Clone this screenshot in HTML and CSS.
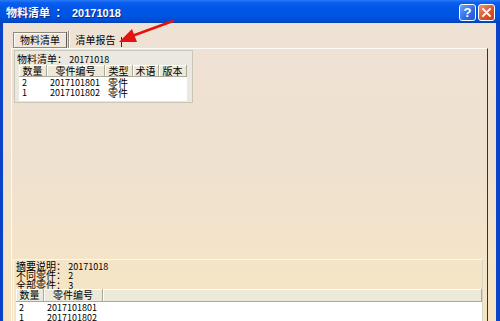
FILE: index.html
```html
<!DOCTYPE html>
<html lang="zh-CN">
<head>
  <meta charset="UTF-8" />
  <title>物料清单</title>
  <link rel="stylesheet" href="styles.css">
</head>
<body>
  <div class="window">
    <!-- Title bar -->
    <div class="titlebar">
      <span class="title">物料清单 ： <span class="tnum">20171018</span></span>
      <div class="caption-btns">
        <span class="cbtn help">?</span>
        <span class="cbtn close">
          <svg width="9" height="9" viewBox="0 0 9 9"><path d="M1 1L8 8M8 1L1 8" stroke="#fff" stroke-width="1.8" stroke-linecap="round"/></svg>
        </span>
      </div>
    </div>

    <div class="client">
      <div class="tabs">
        <div class="tab">物料清单</div>
        <div class="tab current">清单报告</div>
      </div>

      <div class="panel">
        <!-- BOM group -->
        <div class="bom-box">
          <div class="bom-title">物料清单： <span class="num">20171018</span></div>
          <div class="list">
            <div class="head">
              <span class="c1">数量</span><span class="c2">零件编号</span><span class="c3">类型</span><span class="c4">术语</span><span class="c5">版本</span>
            </div>
            <div class="row first"><span class="c1 num">2</span><span class="c2 num">2017101801</span><span class="c3">零件</span></div>
            <div class="row"><span class="c1 num">1</span><span class="c2 num">2017101802</span><span class="c3">零件</span></div>
          </div>
        </div>

        <!-- Summary -->
        <div class="summary">
          <div class="lines">
            <div>摘要说明： <span class="num">20171018</span></div>
            <div>不同零件： <span class="num">2</span></div>
            <div>全部零件： <span class="num">3</span></div>
          </div>
          <div class="list wide">
            <div class="head">
              <span class="c1">数量</span><span class="c2w">零件编号</span><span class="fill"></span>
            </div>
            <div class="row first"><span class="c1 num">2</span><span class="c2w num">2017101801</span></div>
            <div class="row"><span class="c1 num">1</span><span class="c2w num">2017101802</span></div>
          </div>
        </div>
      </div>
    </div>

    <!-- annotation arrow -->
    <svg class="arrow" width="500" height="60" viewBox="0 0 500 60">
      <line x1="173" y1="21" x2="132" y2="36" stroke="#e3140f" stroke-width="2.6" stroke-linecap="round"/>
      <polygon points="119,42 137,42 132,29" fill="#e3140f"/>
    </svg>
  </div>
</body>
</html>
```

FILE: styles.css
```css
/* Reset */
* { box-sizing: border-box; margin: 0; padding: 0; }
body { width: 500px; height: 321px; overflow: hidden; font-family: "Noto Sans CJK SC", "Liberation Sans", sans-serif; font-size: 10px; color: #000; }

/* Window frame */
.window { position: relative; height: 321px; display: flex; flex-direction: column; background: linear-gradient(to right, #0a3fc4, #0a55e0 2%, #0a55e0 98%, #0a3fc4); }
.titlebar { height: 23px; flex: none; display: flex; align-items: center; justify-content: space-between; padding: 2px 5px 0 6px; color: #fff;
  background: linear-gradient(to bottom, #2a7bf4 0%, #0a5ef0 12%, #0056e6 35%, #0054e2 70%, #004bd0 92%, #0040b4 100%); }
.title { font-weight: bold; font-size: 11px; line-height: 14px; word-spacing: 3px; text-shadow: 1px 1px #0b2a8c; }
.tnum { font-family: "Liberation Sans", sans-serif; }
.caption-btns { display: flex; gap: 2px; }
.cbtn { width: 17px; height: 17px; border: 1px solid #fff; border-radius: 3px; display: flex; align-items: center; justify-content: center; color: #fff; font-family: "Liberation Sans", sans-serif; font-weight: bold; font-size: 13px; }
.cbtn.help { background: linear-gradient(135deg, #6ea3f8, #2f6ae4 60%, #2457d0); }
.cbtn.close { background: linear-gradient(135deg, #f0946c, #d9512c 60%, #c4401e); }

/* Client area */
.client { flex: 1; margin: 0 4px 0 3px; border-left: 1px solid #d3ddf4; padding: 8px 8px 0 7px; display: flex; flex-direction: column;
  background: linear-gradient(to bottom, #eee2d5 0%, #efe1cf 50%, #f4e4c8 80%, #f6e5c3 100%); }

/* Tabs */
.tabs { display: flex; height: 17px; padding-left: 2px; flex: none; }
.tab { width: 54px; text-align: center; line-height: 14px; }
.tab:first-child { margin-top: 1px; border: 1px solid #8d8a80; border-right-color: #5e5c55; box-shadow: inset 1px 1px #fdfbf6; background: #efe7dc; }
.tab.current { margin-left: 1px; line-height: 17px; border-left: 1px solid #8d8a80; box-shadow: inset 1px 0 #fdfbf6;
  background: linear-gradient(#2b2b2b, #2b2b2b) right 6px / 1px 10px no-repeat; }

/* Tab panel */
.panel { flex: 1; display: flex; flex-direction: column; justify-content: space-between; border-top: 1px solid #fdfbf6; border-left: 1px solid #fdfbf6; border-right: 1px solid #34332f; padding: 1px 4px 0 1px; }
.num { font-size: 9px; }

/* Group box with bom list */
.bom-box { width: 179px; height: 53px; margin-left: 1px; border: 1px solid #c9c5b8; background: #ebe8df; padding: 2px 0 0 2px; }
.bom-title { height: 11px; line-height: 11px; }
.list { background: #fff; width: 168px; height: 36px; margin: 1px 0 0 2px; overflow: hidden; }
.head { display: flex; height: 12px; background: #ece9d8; }
.head span { border-right: 1px solid #aca899; border-bottom: 1px solid #aca899; box-shadow: inset 1px 1px #fff; text-align: center; line-height: 11px; }
.row { display: flex; height: 10px; line-height: 10px; }
.row.first { margin-top: 1px; }
.row span { padding-left: 3px; }
.c1 { width: 28px; }
.c2 { width: 58px; }
.c3 { width: 28px; }
.c4 { width: 26px; }
.c5 { width: 28px; }
.c2w { width: 59px; }

/* Summary block */
.summary { height: 62px; flex: none; border-top: 1px solid #fbf7ef; border-left: 1px solid #fbf7ef; border-right: 1px solid #d9d3c4; padding-left: 2px; overflow: hidden; }
.lines { height: 29px; padding-top: 0.5px; }
.lines div { height: 9.6px; line-height: 9.6px; }
.list.wide { width: 466px; height: 40px; margin: 0; }
.list.wide .head { height: 13px; }
.list.wide .head span { line-height: 12px; }
.head .fill { flex: 1; }

/* Annotation arrow overlay */
.arrow { position: absolute; left: 0; top: 0; pointer-events: none; }
```
